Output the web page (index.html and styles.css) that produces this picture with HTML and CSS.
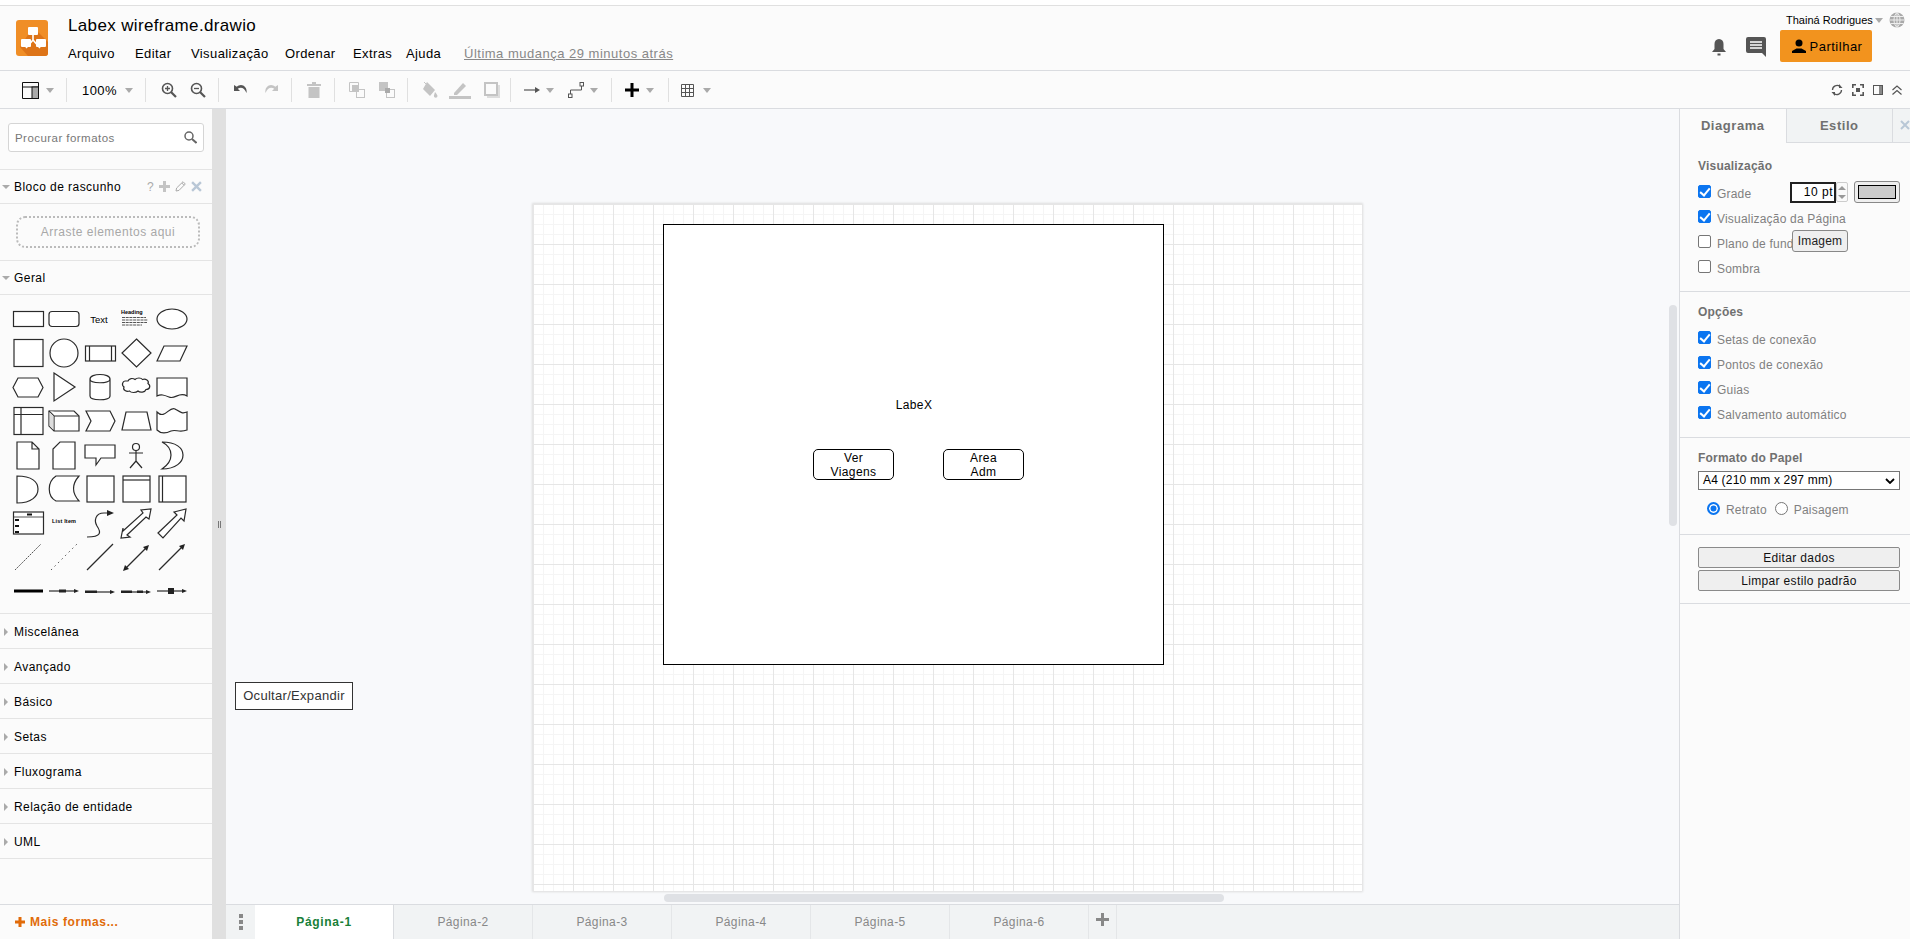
FILE: index.html
```html
<!DOCTYPE html>
<html lang="pt">
<head>
  <meta charset="UTF-8">
  <title>Labex wireframe.drawio</title>
  <link rel="stylesheet" href="styles.css">
</head>
<body>
  <div class="topline"></div>

  <header class="menubar">
    <svg class="logo" viewBox="0 0 32 36">
      <rect width="32" height="36" rx="3" fill="#f08e26"/>
      <path d="M17 7 32 22v11a3 3 0 0 1-3 3H12L4 27z" fill="#dd7418"/>
      <path d="M17 12v8M17 20 10 28M17 20l7 8" stroke="#fff" stroke-width="1.6" fill="none"/>
      <rect x="12" y="7" width="10" height="8" rx="1" fill="#fff"/>
      <rect x="5" y="19" width="10" height="8" rx="1" fill="#fff"/>
      <rect x="20" y="19" width="10" height="8" rx="1" fill="#fff"/>
    </svg>
    <div class="titleblock">
      <div class="doc-title">Labex wireframe.drawio</div>
      <nav class="menu">
        <a class="menu-item w-arquivo">Arquivo</a>
        <a class="menu-item w-editar">Editar</a>
        <a class="menu-item w-visual">Visualização</a>
        <a class="menu-item w-ordenar">Ordenar</a>
        <a class="menu-item w-extras">Extras</a>
        <a class="menu-item w-ajuda">Ajuda</a>
        <a class="last-change">Última mudança 29 minutos atrás</a>
      </nav>
    </div>
    <div class="account">
      <div class="account-top">
        <span class="user">Thainá Rodrigues</span>
        <span class="caret"></span>
        <svg class="globe" viewBox="0 0 16 16"><circle cx="8" cy="8" r="7.5" fill="#a9a9a9"/><path d="M.5 8h15M1.5 4.5h13M1.5 11.5h13M8 .5v15M8 .5C4 4 4 12 8 15.5M8 .5c4 3.500 4 11.5 0 15" stroke="#eee" fill="none"/></svg>
      </div>
      <div class="account-bottom">
        <svg class="bell" viewBox="0 0 16 18"><path d="M8 1c3 0 4.5 2.2 4.5 5v5l2.5 3H1l2.5-3V6C3.500 3.2 5 1 8 1z" fill="#555"/><rect x="6.5" y="15.5" width="3" height="2" fill="#555"/></svg>
        <svg class="comment" viewBox="0 0 20 20"><path d="M2 0h16a2 2 0 0 1 2 2v18l-4-4H2a2 2 0 0 1-2-2V2a2 2 0 0 1 2-2z" fill="#555"/><path d="M4 5h12M4 8h12M4 11h12" stroke="#fff" stroke-width="1.5"/></svg>
        <button class="share">
          <svg viewBox="0 0 14 14"><circle cx="7" cy="4" r="3.5" fill="#000"/><path d="M0 14v-2l4.5-2.500h5L14 12v2z" fill="#000"/></svg>
          Partilhar
        </button>
      </div>
    </div>
  </header>

  <div class="toolbar">
    <div class="tb-group g1">
      <svg class="ico" viewBox="0 0 17 17"><path d="M.5.5h16v16H.5zM.5 5h16" fill="none" stroke="#111"/><rect x="10" y="5" width="6.5" height="11.5" fill="#aaa" stroke="#111"/></svg>
      <span class="caret"></span>
    </div>
    <div class="tb-group g2"><span class="zoom-value">100%</span><span class="caret"></span></div>
    <div class="tb-group g3">
      <svg class="ico" viewBox="0 0 16 16"><circle cx="6.5" cy="6.5" r="5" fill="none" stroke="#555" stroke-width="1.6"/><path d="m10 10 5 5" stroke="#555" stroke-width="2.2"/><path d="M4 6.5h5M6.5 4v5" stroke="#555" stroke-width="1.3"/></svg>
      <svg class="ico" viewBox="0 0 16 16"><circle cx="6.5" cy="6.5" r="5" fill="none" stroke="#555" stroke-width="1.6"/><path d="m10 10 5 5" stroke="#555" stroke-width="2.2"/><path d="M4 6.5h5" stroke="#555" stroke-width="1.3"/></svg>
    </div>
    <div class="tb-group g4">
      <svg class="ico" viewBox="0 0 16 16"><path d="M1 3v6h6L4.800 6.800C7.500 4.500 11.500 5.500 13.500 11c1-5-2.500-8-5.500-8-1.700 0-3 .7-4.200 1.800z" fill="#555"/></svg>
      <svg class="ico" viewBox="0 0 16 16"><path d="M15 3v6H9l2.200-2.200C8.500 4.500 4.500 5.500 2.500 11c-1-5 2.500-8 5.500-8 1.700 0 3 .7 4.200 1.800z" fill="#c4c4c4"/></svg>
    </div>
    <div class="tb-group g5">
      <svg class="ico" viewBox="0 0 14 16"><path d="M0 2h14v2H0zM5 0h4v2H5zM1.5 5h11v11h-11z" fill="#c4c4c4"/></svg>
    </div>
    <div class="tb-group g6">
      <svg class="ico" viewBox="0 0 16 16"><path d="M.5.5h9v4M.5.5v9h4" fill="none" stroke="#c4c4c4"/><rect x="3" y="3" width="7" height="7" fill="#c4c4c4"/><rect x="7.5" y="7.5" width="8" height="8" fill="none" stroke="#c4c4c4"/></svg>
      <svg class="ico" viewBox="0 0 16 16"><rect x="7.5" y="7.5" width="8" height="8" fill="none" stroke="#c4c4c4"/><rect x=".5" y=".5" width="8" height="8" fill="#c4c4c4" stroke="#c4c4c4"/><rect x="6" y="6" width="5" height="5" fill="#aaa"/></svg>
    </div>
    <div class="tb-group g7">
      <svg class="ico w17" viewBox="0 0 17 16"><path d="m6 0 8 8-5 6-7-7zM14 10c1.500 2 2.500 3 2.500 4a1.800 1.800 0 0 1-3.600 0c0-1 .6-2 1.100-4z" fill="#c4c4c4"/><path d="m3 0 3 3" stroke="#c4c4c4"/></svg>
      <svg class="ico w22" viewBox="0 0 22 17"><path d="m5 11 9-10 3 3-9 9H5z" fill="#c4c4c4"/><rect y="14" width="22" height="3" fill="#c4c4c4"/></svg>
      <svg class="ico" viewBox="0 0 16 16"><rect x="3" y="3" width="13" height="13" fill="#ddd"/><rect x="1" y="1" width="12" height="12" fill="#fbfbfb" stroke="#c4c4c4" stroke-width="2"/></svg>
    </div>
    <div class="tb-group g8">
      <svg class="ico" viewBox="0 0 16 16"><path d="M0 8h12" stroke="#555" stroke-width="1.2"/><path d="m11 5 5 3-5 3z" fill="#555"/></svg>
      <span class="caret mr"></span>
      <svg class="ico" viewBox="0 0 16 16"><path d="M2.500 12V8h11V4" fill="none" stroke="#555"/><rect x=".5" y="12" width="3.500" height="3.500" fill="none" stroke="#555"/><rect x="12" y=".5" width="3.500" height="3.500" fill="none" stroke="#555"/></svg>
      <span class="caret"></span>
    </div>
    <div class="tb-group g9">
      <svg class="ico" viewBox="0 0 14 14"><path d="M5.5 0h3v5.500H14v3H8.500V14h-3V8.500H0v-3h5.500z" fill="#000"/></svg>
      <span class="caret"></span>
    </div>
    <div class="tb-group g10">
      <svg class="ico w13" viewBox="0 0 13 13"><path d="M.5.5h12v12H.5zM4.500.5v12M8.500.5v12M.5 4.500h12M.5 8.500h12" fill="none" stroke="#555"/></svg>
      <span class="caret"></span>
    </div>
    <div class="tb-right">
      <svg class="ico w12" viewBox="0 0 12 12"><path d="M1.500 6a4.500 4.500 0 0 1 7.500-3.400M10.500 6A4.500 4.500 0 0 1 3 9.400" fill="none" stroke="#555" stroke-width="1.3"/><path d="M8 0v4h3.500zM4 12V8H.5z" fill="#555"/></svg>
      <svg class="ico w12" viewBox="0 0 12 12"><path d="M.8 4V.8H4M8 .8h3.200V4M11.200 8v3.200H8M4 11.200H.8V8" fill="none" stroke="#555" stroke-width="1.6"/><rect x="4" y="4" width="4" height="4" fill="#555"/></svg>
      <svg class="ico w10" viewBox="0 0 10 10"><rect x=".5" y=".5" width="9" height="9" fill="none" stroke="#555"/><rect x="6" y="1" width="3" height="8" fill="#888"/></svg>
      <svg class="ico w10" viewBox="0 0 10 10"><path d="m.5 5 4.500-4 4.500 4M.5 9.500l4.500-4 4.500 4" fill="none" stroke="#555" stroke-width="1.2"/></svg>
    </div>
  </div>

  <main class="workspace">
    <aside class="sidebar">
      <div class="search-wrap">
        <div class="search">
          <span class="search-text">Procurar formatos</span>
          <svg viewBox="0 0 13 13"><circle cx="5" cy="5" r="4" fill="none" stroke="#666" stroke-width="1.5"/><path d="m8 8 4.500 4" stroke="#666" stroke-width="2"/></svg>
        </div>
      </div>
      <div class="sec-head">
        <span class="tri-down"></span><span class="sec-name">Bloco de rascunho</span>
        <span class="sec-tools">
          <span class="qm">?</span>
          <svg viewBox="0 0 11 11"><path d="M4 0h3v4h4v3H7v4H4V7H0V4h4z" fill="#c4c4c4"/></svg>
          <svg viewBox="0 0 11 11"><path d="M1 10l.6-3L8 .7 10.300 3 4 9.400zM6.800 2l2.300 2.300" fill="none" stroke="#aaa"/></svg>
          <svg viewBox="0 0 10 10"><path d="m1 1 8 8M9 1 1 9" stroke="#b9c7d6" stroke-width="2.2"/></svg>
        </span>
      </div>
      <div class="scratch"><div class="scratch-box">Arraste elementos aqui</div></div>
      <div class="sec-head"><span class="tri-down"></span><span class="sec-name">Geral</span></div>

      <div class="palette">
        <svg viewBox="0 0 36 34"><rect x="3.5" y="9.5" width="30" height="15"/></svg>
        <svg viewBox="0 0 36 34"><rect x="3" y="9.5" width="30" height="15" rx="3"/></svg>
        <svg viewBox="0 0 36 34"><text class="pal-text" x="17" y="20.5">Text</text></svg>
        <svg viewBox="0 0 36 34"><text class="pal-tiny" x="3" y="12">Heading</text><path class="thin" d="M4 15.5h24M4 18h26M4 20.5h25M4 23h20" stroke-dasharray="3 .7"/></svg>
        <svg viewBox="0 0 36 34"><ellipse cx="18" cy="17" rx="15" ry="10"/></svg>

        <svg viewBox="0 0 36 34"><rect x="4" y="3.5" width="29" height="27"/></svg>
        <svg viewBox="0 0 36 34"><circle cx="18" cy="17" r="14"/></svg>
        <svg viewBox="0 0 36 34"><rect x="3.5" y="10" width="30" height="15"/><path d="M7.500 10v15M29.500 10v15"/></svg>
        <svg viewBox="0 0 36 34"><path d="M18.500 3 33 17 18.500 31 4 17z"/></svg>
        <svg viewBox="0 0 36 34"><path d="M3 25 10 10h23l-7 15z"/></svg>

        <svg viewBox="0 0 36 34"><path d="M3 17.500 8 8h20l5 9.500-5 9.500H8z"/></svg>
        <svg viewBox="0 0 36 34"><path d="M8 3 29 17 8 31z"/></svg>
        <svg viewBox="0 0 36 34"><path d="M8 9v17c0 5 20 5 20 0V9c0-6-20-6-20 0c0 5 20 5 20 0"/></svg>
        <svg viewBox="0 0 36 34"><path d="M10 11c1-3 5-3 7-1.500 2-2 6-2 7.500 0 3-1 7 1 5.500 4 3 2 2 6-2 6-1 3-6 3.500-8 1.500-2 2-7 2-8.500 0-3 1-7-1-5.500-4-3-2-1-6 1-6z"/></svg>
        <svg viewBox="0 0 36 34"><path d="M3 8h30v18c-8-5-12 4-18 1-5-2-8-3-12-1z"/></svg>

        <svg viewBox="0 0 36 34"><rect x="4" y="3.5" width="29" height="27"/><path d="M11 3.500v27M4 10.500h29"/></svg>
        <svg viewBox="0 0 36 34"><path d="M3 7h25l5 5v15H8l-5-5z"/><path d="M3 7l5 5h25M8 12v15"/><path class="shade" d="M3.500 8 7.500 12v14l-4-4z"/></svg>
        <svg viewBox="0 0 36 34"><path d="M4 7h24l5 10-5 10H4l5-10z"/></svg>
        <svg viewBox="0 0 36 34"><path d="M8 8h21l4 18H4z"/></svg>
        <svg viewBox="0 0 36 34"><path d="M3 8c8 8 12-6 18-3 5 3 7 5 12 3v18c-8 3-11-1-16 1-6 3-10 3-14-1z"/></svg>

        <svg viewBox="0 0 36 34"><path d="M7 4h15l7 7v20H7zM22 4v7h7"/></svg>
        <svg viewBox="0 0 36 34"><path d="M14 4h15v27H7V11z"/></svg>
        <svg viewBox="0 0 36 34"><path d="M3 7h30v13H19l-5 7v-7H3z"/></svg>
        <svg viewBox="0 0 36 34"><circle cx="18" cy="9" r="3.5"/><path d="M18 12.500V23M11 15h14M18 23l-6 7M18 23l6 7"/></svg>
        <svg viewBox="0 0 36 34"><path d="M8 4c14 0 21 6 21 13s-7 14-21 14c6-4 9-9 9-14s-3-10-9-13z"/></svg>

        <svg viewBox="0 0 36 34"><path d="M7 4c15 0 21 6 21 13s-6 14-21 14z"/></svg>
        <svg viewBox="0 0 36 34"><path d="M10 4h23c-7 8-7 17 0 25H10C1 24 1 10 10 4z"/></svg>
        <svg viewBox="0 0 36 34"><rect x="5" y="4" width="27" height="26"/></svg>
        <svg viewBox="0 0 36 34"><rect x="5" y="4" width="27" height="26"/><path d="M5 8h27"/></svg>
        <svg viewBox="0 0 36 34"><rect x="5" y="4" width="27" height="26"/><path d="M8.500 4v26"/></svg>

        <svg viewBox="0 0 36 34"><rect x="3.5" y="6" width="30" height="22"/><path class="thin" d="M3.500 11h30"/><path class="thick" d="M5 14h4M5 20h4M5 26h4M17 8.500h5"/></svg>
        <svg viewBox="0 0 36 34"><text class="pal-tiny" x="6" y="17" textLength="24">List Item</text></svg>
        <svg viewBox="0 0 36 34"><path d="M5 31c15 0 14-5 10-11-3-5-2-13 7-13h4"/><path class="solid" d="m25 4 7 3-7 3z"/></svg>
        <svg viewBox="0 0 36 34"><path d="M5 25 25 7l-2-3 10-1-2 10-3-2L9 29l3 2-9 1 2-10z"/></svg>
        <svg viewBox="0 0 36 34"><path d="M4 27 23 9l-3-3 12-3-2 12-3-3L9 32z"/></svg>

        <svg viewBox="0 0 36 34"><path class="dots" d="M5 30 31 4" stroke-dasharray="2 1"/></svg>
        <svg viewBox="0 0 36 34"><path class="dots" d="M5 30 31 4" stroke-dasharray="1.500 3.500"/></svg>
        <svg viewBox="0 0 36 34"><path d="M5 30 31 4"/></svg>
        <svg viewBox="0 0 36 34"><path d="M8 28 28 8"/><path class="solid" d="m5 31 2-6 4 4zM31 5l-2 6-4-4z"/></svg>
        <svg viewBox="0 0 36 34"><path d="M5 30 28 7"/><path class="solid" d="m31 4-2 6-4-4z"/></svg>

        <svg viewBox="0 0 36 34"><path class="thick3" d="M4 17h29"/></svg>
        <svg viewBox="0 0 36 34"><path d="M3 17h26"/><path class="solid" d="m33 17-5-2v4z"/><rect class="solid" x="13" y="15.500" width="7" height="3"/></svg>
        <svg viewBox="0 0 36 34"><path d="M3 18h26"/><path class="solid" d="m33 18-5-2v4z"/><rect class="solid" x="3" y="16.500" width="12" height="2.500"/></svg>
        <svg viewBox="0 0 36 34"><path d="M3 18h26"/><path class="solid" d="m33 18-5-2v4z"/><rect class="solid" x="3" y="16.500" width="11" height="2.500"/><rect class="solid" x="19" y="16.500" width="6" height="2.500"/></svg>
        <svg viewBox="0 0 36 34"><path d="M3 17h26"/><path class="solid" d="m33 17-5-2v4z"/><rect class="solid" x="14" y="14" width="6" height="6"/></svg>
      </div>

      <div class="sec-row"><span class="tri-right"></span>Miscelânea</div>
      <div class="sec-row"><span class="tri-right"></span>Avançado</div>
      <div class="sec-row"><span class="tri-right"></span>Básico</div>
      <div class="sec-row"><span class="tri-right"></span>Setas</div>
      <div class="sec-row"><span class="tri-right"></span>Fluxograma</div>
      <div class="sec-row"><span class="tri-right"></span>Relação de entidade</div>
      <div class="sec-row"><span class="tri-right"></span>UML</div>
      <div class="side-fill"></div>
      <div class="more-shapes"><svg viewBox="0 0 10 10"><path d="M3.500 0h3v3.500H10v3H6.500V10h-3V6.500H0v-3h3.500z" fill="#e16b09"/></svg>Mais formas...</div>
    </aside>

    <div class="splitter"><span class="grip"></span></div>

    <div class="center">
      <div class="canvas">
        <div class="page">
          <div class="frame"></div>
          <div class="diagram-label">LabeX</div>
          <div class="node node-a">Ver<br>Viagens</div>
          <div class="node node-b">Area<br>Adm</div>
        </div>
        <div class="tooltip">Ocultar/Expandir</div>
        <div class="scroll-v"></div>
        <div class="scroll-h"></div>
      </div>

      <footer class="tabbar">
        <div class="tabs-menu"><i></i><i></i><i></i></div>
        <div class="ptab active">Página-1</div>
        <div class="ptab">Página-2</div>
        <div class="ptab">Página-3</div>
        <div class="ptab">Página-4</div>
        <div class="ptab">Página-5</div>
        <div class="ptab">Página-6</div>
        <div class="tab-add"><svg viewBox="0 0 13 13"><path d="M5 0h3v5h5v3H8v5H5V8H0V5h5z" fill="#888"/></svg></div>
      </footer>
    </div>

    <aside class="format">
      <div class="format-tabs">
        <div class="ftab active">Diagrama</div>
        <div class="ftab">Estilo</div>
        <div class="ftab-rest"><svg viewBox="0 0 10 10"><path d="m1 1 8 8M9 1 1 9" stroke="#b9c7d6" stroke-width="2"/></svg></div>
      </div>

      <section class="fsec">
        <h4>Visualização</h4>
        <label class="opt"><span class="cb on"></span>Grade
          <span class="grid-tools">
            <span class="pt-input">10 pt</span>
            <span class="spinner"><i class="up"></i><i class="down"></i></span>
            <span class="color-btn"><b></b></span>
          </span>
        </label>
        <label class="opt"><span class="cb on"></span>Visualização da Página</label>
        <label class="opt"><span class="cb"></span>Plano de fundo<span class="img-btn">Imagem</span></label>
        <label class="opt"><span class="cb"></span>Sombra</label>
      </section>

      <section class="fsec">
        <h4>Opções</h4>
        <label class="opt"><span class="cb on"></span>Setas de conexão</label>
        <label class="opt"><span class="cb on"></span>Pontos de conexão</label>
        <label class="opt"><span class="cb on"></span>Guias</label>
        <label class="opt"><span class="cb on"></span>Salvamento automático</label>
      </section>

      <section class="fsec paper">
        <h4 class="paper-head">Formato do Papel</h4>
        <div class="select">A4 (210 mm x 297 mm)
          <svg viewBox="0 0 10 6"><path d="m1 1 4 4 4-4" fill="none" stroke="#000" stroke-width="1.8"/></svg>
        </div>
        <div class="radios">
          <span class="radio on"></span><span class="radio-label first">Retrato</span>
          <span class="radio"></span><span class="radio-label">Paisagem</span>
        </div>
      </section>

      <section class="fsec actions">
        <button class="act">Editar dados</button>
        <button class="act">Limpar estilo padrão</button>
      </section>
    </aside>
  </main>
</body>
</html>
```

FILE: styles.css
```css
* { box-sizing: border-box; }
html, body { height: 100%; }
body { margin: 0; height: 939px; overflow: hidden; display: flex; flex-direction: column; background: #fbfbfb; color: #000; font-family: "Liberation Sans", Arial, sans-serif; font-size: 12px; letter-spacing: .4px; }

.topline { height: 6px; background: #fff; border-bottom: 1px solid #e0e0e0; flex: none; }

/* menubar */
.menubar { height: 65px; flex: none; display: flex; background: #fbfbfb; border-bottom: 1px solid #dadce0; position: relative; }
.logo { width: 32px; height: 36px; margin: 14px 0 0 16px; flex: none; }
.titleblock { margin-left: 20px; }
.doc-title { font-size: 17px; line-height: 22px; margin-top: 9px; letter-spacing: .35px; }
.menu { display: flex; margin-top: 8px; font-size: 13px; line-height: 18px; }
.menu-item { flex: none; }
.w-arquivo { width: 67px; }
.w-editar { width: 56px; }
.w-visual { width: 94px; }
.w-ordenar { width: 68px; }
.w-extras { width: 53px; }
.w-ajuda { width: 58px; }
.last-change { color: #888; text-decoration: underline; letter-spacing: .5px; }
.account { margin-left: auto; width: 130px; }
.account-top { display: flex; align-items: center; height: 16px; margin-top: 6px; padding-left: 6px; font-size: 11px; letter-spacing: 0; }
.user { width: 88px; white-space: nowrap; }
.account-top .caret { margin-left: 1px; }
.globe { width: 16px; height: 16px; margin-left: 6px; }
.account-bottom { display: flex; margin-left: -70px; align-items: flex-start; }
.bell { width: 16px; height: 18px; margin: 10px 0 0 1px; }
.comment { width: 20px; height: 20px; margin: 9px 0 0 19px; }
.share { width: 92px; height: 32px; margin: 2px 0 0 14px; padding: 0 0 0 2px; border: none; border-radius: 2px; background: #f2931e; color: #000; font: 13px "Liberation Sans", Arial, sans-serif; letter-spacing: .5px; display: flex; align-items: center; justify-content: center; gap: 4px; }
.share svg { width: 14px; height: 14px; }

.caret { display: inline-block; width: 0; height: 0; border-left: 4px solid transparent; border-right: 4px solid transparent; border-top: 5px solid #aaa; flex: none; }

/* toolbar */
.toolbar { height: 38px; flex: none; display: flex; background: #fbfbfb; border-bottom: 1px solid #dadce0; }
.tb-group { height: 24px; margin-top: 7px; display: flex; align-items: center; border-right: 1px solid #e0e0e0; padding-left: 15px; flex: none; }
.ico { width: 16px; height: 16px; flex: none; display: block; }
.w17 { width: 17px; }
.w22 { width: 22px; height: 17px; }
.w13 { width: 13px; height: 13px; }
.w12 { width: 12px; height: 12px; }
.w10 { width: 10px; height: 10px; }
.g1 { width: 67px; padding-left: 22px; gap: 7px; }
.g1 .ico { width: 17px; height: 17px; }
.g2 { width: 79px; gap: 8px; font-size: 13px; }
.g3 { width: 73px; gap: 13px; }
.g4 { width: 73px; padding-left: 14px; gap: 14px; }
.g5 { width: 43px; }
.g5 .ico { width: 14px; }
.g6 { width: 73px; padding-left: 14px; gap: 14px; }
.g7 { width: 103px; padding-left: 13px; gap: 11px; }
.g7 .ico:last-child { margin-left: 2px; }
.g8 { width: 101px; padding-left: 13px; gap: 6px; }
.g8 .mr { margin-right: 8px; }
.g9 { width: 57px; padding-left: 13px; gap: 7px; }
.g9 .ico { width: 14px; height: 14px; }
.g10 { border-right: none; padding-left: 12px; gap: 9px; }
.tb-right { margin-left: auto; height: 24px; margin-top: 7px; display: flex; align-items: center; padding-right: 8px; gap: 9px; }

/* workspace */
.workspace { flex: 1; min-height: 0; display: flex; }

.sidebar { width: 212px; flex: none; display: flex; flex-direction: column; background: #fbfbfb; letter-spacing: .45px; }
.search-wrap { height: 61px; padding: 14px 8px 0 8px; border-bottom: 1px solid #e4e4e4; flex: none; }
.search { height: 29px; width: 196px; background: #fff; border: 1px solid #d5d5d5; border-radius: 3px; display: flex; align-items: center; justify-content: space-between; padding: 0 6px 0 6px; font-size: 11.5px; color: #777; }
.search svg { width: 13px; height: 13px; }
.sec-head { height: 34px; flex: none; display: flex; align-items: center; border-bottom: 1px solid #e4e4e4; padding-left: 2px; }
.sec-name { margin-left: 4px; }
.tri-down { width: 0; height: 0; border-left: 4px solid transparent; border-right: 4px solid transparent; border-top: 4px solid #aaa; }
.tri-right { display: inline-block; width: 0; height: 0; border-top: 4px solid transparent; border-bottom: 4px solid transparent; border-left: 4px solid #aaa; margin: 0 6px 0 4px; }
.sec-tools { margin-left: auto; display: flex; align-items: center; gap: 5px; padding-right: 10px; }
.sec-tools svg { width: 11px; height: 11px; }
.qm { color: #aaa; font-size: 12px; }
.scratch { height: 57px; flex: none; padding: 12px 12px 0 16px; border-bottom: 1px solid #e4e4e4; }
.scratch-box { width: 184px; height: 32px; border: 2px dotted #bbb; border-radius: 9px; color: #a8a8a8; text-align: center; line-height: 28px; letter-spacing: .5px; }

.palette { height: 319px; flex: none; display: grid; grid-template-columns: repeat(5, 36px); grid-auto-rows: 34px; padding: 7px 0 0 10px; align-content: start; border-bottom: 1px solid #e4e4e4; }
.palette svg { width: 36px; height: 34px; fill: #fff; stroke: #2a2a2a; stroke-width: 1.2; }
.palette .thin { stroke-width: .8; fill: none; }
.palette .dots { stroke-width: 1; stroke: #555; }
.palette .thick { stroke-width: 1.8; stroke: #111; fill: none; }
.palette .thick3 { stroke-width: 3; stroke: #000; fill: none; }
.palette .solid { fill: #222; stroke: none; }
.palette .shade { fill: #ddd; stroke: none; }
.pal-text { font-size: 9.5px; fill: #000; stroke: none; text-anchor: middle; letter-spacing: 0; }
.pal-tiny { font-size: 5.5px; font-weight: bold; fill: #000; stroke: none; letter-spacing: 0; }

.sec-row { height: 35px; flex: none; display: flex; align-items: center; border-bottom: 1px solid #e4e4e4; padding-top: 1px; }
.side-fill { flex: 1; }
.more-shapes { height: 35px; flex: none; display: flex; align-items: center; padding-left: 15px; color: #e16b09; font-weight: bold; gap: 5px; border-top: 1px solid #dadce0; letter-spacing: .6px; }
.more-shapes svg { width: 10px; height: 10px; }

.splitter { width: 14px; flex: none; background: #e0e0e0; display: flex; align-items: center; justify-content: center; }
.grip { width: 3px; height: 7px; border-left: 1px solid #777; border-right: 1px solid #777; }

.center { flex: 1; min-width: 0; display: flex; flex-direction: column; }
.canvas { flex: 1; min-height: 0; background: #f8f9fb; position: relative; overflow: hidden; }
.page { position: absolute; left: 307px; top: 95px; width: 829px; height: 687px; background-color: #fff; background-image: linear-gradient(#e6e6e6 1px, transparent 1px), linear-gradient(90deg, #e6e6e6 1px, transparent 1px), linear-gradient(#f5f5f5 1px, transparent 1px), linear-gradient(90deg, #f5f5f5 1px, transparent 1px); background-size: 40px 40px, 40px 40px, 10px 10px, 10px 10px; box-shadow: 0 0 2px 1px #ddd; }
.frame { position: absolute; left: 130px; top: 20px; width: 501px; height: 441px; background: #fff; border: 1px solid #000; }
.diagram-label { position: absolute; left: 331px; top: 194px; width: 100px; text-align: center; font-size: 12px; line-height: 14px; }
.node { position: absolute; top: 245px; width: 81px; height: 31px; background: #fff; border: 1px solid #000; border-radius: 5px; text-align: center; font-size: 12px; line-height: 14px; padding-top: 1px; }
.node-a { left: 280px; }
.node-b { left: 410px; }
.tooltip { position: absolute; left: 9px; top: 573px; width: 118px; height: 28px; background: #fff; border: 1px solid #333; color: #333; font-size: 13px; line-height: 26px; text-align: center; letter-spacing: .3px; white-space: nowrap; }
.scroll-v { position: absolute; right: 2px; top: 196px; width: 8px; height: 221px; border-radius: 4px; background: #dfe1e5; }
.scroll-h { position: absolute; left: 438px; bottom: 2px; width: 560px; height: 8px; border-radius: 4px; background: #dfe1e5; }

/* page tabs */
.tabbar { height: 35px; flex: none; display: flex; background: #f1f3f4; border-top: 1px solid #dadce0; }
.tabs-menu { width: 29px; flex: none; display: flex; flex-direction: column; align-items: center; justify-content: center; gap: 2px; }
.tabs-menu i { width: 4px; height: 4px; background: #888; }
.ptab { width: 139px; flex: none; text-align: center; line-height: 34px; color: #888; border-right: 1px solid #e4e6e8; }
.ptab.active { background: #fff; color: #188038; font-weight: bold; border-right: 1px solid #dadce0; letter-spacing: .7px; }
.tab-add { width: 28px; flex: none; border-right: 1px solid #e4e6e8; display: flex; align-items: center; justify-content: center; padding-bottom: 5px; }
.tab-add svg { width: 13px; height: 13px; }

/* format panel */
.format { width: 231px; flex: none; background: #fbfbfb; border-left: 1px solid #dadce0; font-size: 12px; color: #808080; letter-spacing: .2px; }
.format-tabs { height: 34px; display: flex; font-weight: bold; font-size: 13px; color: #707070; }
.ftab { width: 107px; text-align: center; line-height: 33px; background: #f1f3f4; border-bottom: 1px solid #dadce0; border-right: 1px solid #dadce0; letter-spacing: .55px; }
.ftab.active { background: #fbfbfb; border-bottom: none; }
.ftab-rest { flex: 1; background: #f1f3f4; border-bottom: 1px solid #dadce0; padding: 11px 0 0 7px; }
.ftab-rest svg { width: 10px; height: 10px; display: block; }
.fsec { padding: 16px 10px 11px 18px; border-bottom: 1px solid #dadce0; }
.fsec:nth-of-type(2) { padding-top: 13px; }
h4 { margin: 0 0 7px; font-size: 12px; line-height: 14px; color: #707070; }
.opt { height: 25px; display: flex; align-items: flex-start; padding-top: 6px; line-height: 16px; white-space: nowrap; position: relative; }
.cb { width: 13px; height: 13px; border: 1px solid #767676; border-radius: 2px; background: #fff; margin: -1px 6px 0 0; flex: none; position: relative; }
.cb.on { background: #0b75f0; border-color: #0b75f0; }
.cb.on::after { content: ""; position: absolute; left: 3px; top: 0; width: 4px; height: 8px; border: solid #fff; border-width: 0 2px 2px 0; transform: rotate(40deg); }
.grid-tools { position: absolute; left: 92px; top: 2px; display: flex; }
.pt-input { width: 46px; height: 21px; background: #fff; border: 2px solid #222; color: #000; text-align: right; line-height: 17px; padding-right: 1px; letter-spacing: .5px; }
.spinner { width: 12px; height: 20px; border: 1px solid #ccc; border-radius: 2px; display: flex; flex-direction: column; align-items: center; justify-content: space-around; background: #fafafa; }
.spinner i { width: 0; height: 0; border-left: 4px solid transparent; border-right: 4px solid transparent; }
.spinner .up { border-bottom: 4px solid #999; }
.spinner .down { border-top: 4px solid #999; }
.color-btn { width: 46px; height: 22px; margin: -1px 0 0 6px; border: 1px solid #888; border-radius: 3px; background: #efefef; padding: 3px; }
.color-btn b { display: block; height: 100%; background: #ccc; border: 1px solid #000; }
.img-btn { position: absolute; left: 94px; top: 0; width: 56px; height: 22px; background: #efefef; border: 1px solid #888; border-radius: 3px; color: #222; text-align: center; line-height: 20px; }
.paper { height: 97px; padding-top: 13px; padding-bottom: 0; }
h4.paper-head { margin-bottom: 6px; }
.select { width: 202px; height: 19px; background: #fff; border: 1px solid #767676; color: #000; line-height: 17px; padding-left: 4px; display: flex; justify-content: space-between; align-items: center; font-size: 12px; }
.select svg { width: 10px; height: 6px; margin-right: 4px; }
.radios { display: flex; align-items: center; margin: 11px 0 0 9px; }
.radio { width: 13px; height: 13px; border: 1px solid #767676; border-radius: 50%; background: #fff; flex: none; margin-top: -2px; }
.radio.on { border: 2px solid #0b75f0; box-shadow: inset 0 0 0 1.5px #fff; background: #0b75f0; }
.radio-label { margin: 2px 0 0 6px; }
.radio-label.first { margin-right: 8px; }
.actions { height: 69px; padding: 12px 0 0 18px; display: flex; flex-direction: column; gap: 2px; }
.act { width: 202px; height: 21px; padding: 0; background: #efefef; border: 1px solid #8a8a8a; border-radius: 2px; color: #111; font: 12px "Liberation Sans", Arial, sans-serif; letter-spacing: .35px; }
```
